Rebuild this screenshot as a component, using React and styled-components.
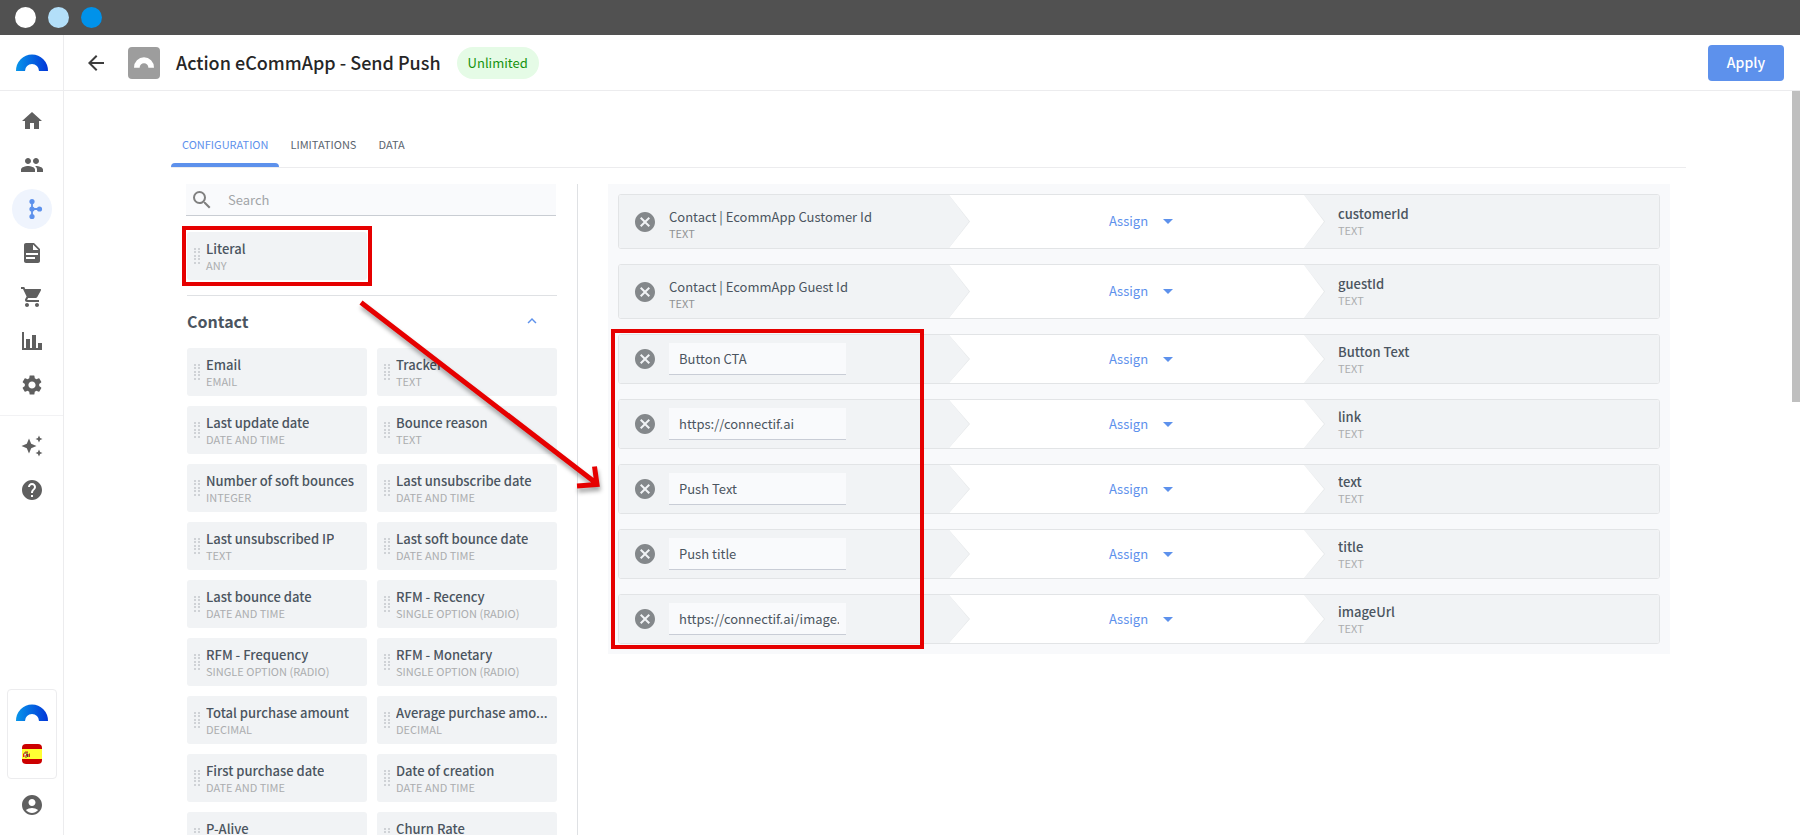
import styled, { createGlobalStyle } from "styled-components";
import {
  MdAccountCircle,
  MdArrowBack,
  MdArrowDropDown,
  MdCancel,
  MdGroup,
  MdHelp,
  MdHome,
  MdKeyboardArrowUp,
  MdSearch,
  MdSettings,
  MdShoppingCart,
} from "react-icons/md";

const GlobalStyle = createGlobalStyle`
  * {
    box-sizing: border-box;
  }

  body {
    margin: 0;
    overflow: hidden;
    background: #fff;
    color: #4b5560;
    font-family: "Noto Sans CJK SC", "Noto Sans", sans-serif;
    font-size: 13px;
    line-height: 16px;
  }

  button,
  input {
    font: inherit;
    color: inherit;
    border: 0;
    padding: 0;
    background: none;
  }

  svg {
    display: block;
    flex-shrink: 0;
  }
`;

const Window = styled.div`
  display: flex;
  flex-direction: column;
  height: 100vh;
`;

const WindowBar = styled.div`
  display: flex;
  align-items: center;
  flex-shrink: 0;
  gap: 12px;
  height: 35px;
  padding: 0 15px 1px;
  background: #515151;
`;

const WindowDot = styled.span`
  width: 21px;
  height: 21px;
  border-radius: 50%;
  background: ${props => props.$color};
`;

const Shell = styled.div`
  display: flex;
  flex: 1;
  min-height: 0;
`;

const Sidebar = styled.aside`
  display: flex;
  flex-direction: column;
  align-items: center;
  flex-shrink: 0;
  width: 64px;
  border-right: 1px solid #ececee;
  color: #5f5f5f;
`;

const SidebarLogo = styled.a`
  display: flex;
  align-items: center;
  justify-content: center;
  width: 100%;
  height: 56px;
  border-bottom: 1px solid #ececee;
`;

const Nav = styled.nav`
  display: flex;
  flex-direction: column;
  align-items: center;
  gap: 4px;
  width: 100%;
  padding: 10px 0;
  border-bottom: ${props => (props.$divided ? "1px solid #f2f2f4" : "0")};
`;

const NavLink = styled.a`
  display: flex;
  align-items: center;
  justify-content: center;
  width: 40px;
  height: 40px;
  border-radius: 50%;
  color: ${props => (props.$active ? "#5d91ec" : "inherit")};
  background: ${props => (props.$active ? "#eff4fd" : "transparent")};
`;

const StoreButton = styled.button`
  display: flex;
  flex-direction: column;
  align-items: center;
  justify-content: space-between;
  width: 50px;
  height: 90px;
  margin-top: auto;
  padding: 14px 0;
  border: 1px solid #ececee;
  border-radius: 4px;
`;

const AccountLink = styled(NavLink)`
  margin: 6px 0 10px;
`;

const Main = styled.main`
  display: flex;
  flex-direction: column;
  flex: 1;
  min-width: 0;
`;

const Header = styled.header`
  display: flex;
  align-items: center;
  flex-shrink: 0;
  gap: 16px;
  height: 56px;
  padding: 0 16px 0 20px;
  border-bottom: 1px solid #ececee;
`;

const BackButton = styled.button`
  margin-right: 4px;
  color: #3c3c3c;
`;

const AppIcon = styled.span`
  display: flex;
  align-items: center;
  justify-content: center;
  width: 32px;
  height: 32px;
  border-radius: 4px;
  background: #9d9d9d;
`;

const Title = styled.h1`
  margin: 0;
  padding-bottom: 2px;
  color: #262626;
  font-size: 18px;
  font-weight: 500;
  line-height: 24px;
`;

const Badge = styled.span`
  padding: 8px 11px;
  border-radius: 16px;
  color: #16930f;
  background: #e5fbe6;
`;

const ApplyButton = styled.button`
  height: 36px;
  margin-left: auto;
  padding: 0 19px 1px;
  border-radius: 4px;
  color: #fff;
  background: #5d91ec;
  font-size: 14px;
  font-weight: 500;
`;

const ScrollArea = styled.div`
  display: flex;
  flex: 1;
  min-height: 0;
`;

const Content = styled.div`
  display: flex;
  flex-direction: column;
  flex: 1;
  min-width: 0;
  padding: 36px 106px 0 107px;
`;

const ScrollTrack = styled.div`
  width: 8px;
`;

const ScrollThumb = styled.div`
  height: 311px;
  background: #bfbfbf;
`;

const Tabs = styled.div`
  display: flex;
  flex-shrink: 0;
  height: 41px;
  border-bottom: 1px solid #ececee;
`;

const Tab = styled.button`
  position: relative;
  padding: 0 11px 6px;
  color: ${props => (props.$active ? "#5d91ec" : "#5a646e")};
  font-size: 11px;

  &::after {
    content: "";
    display: ${props => (props.$active ? "block" : "none")};
    position: absolute;
    left: 0;
    right: 0;
    bottom: 0;
    height: 4px;
    border-radius: 4px 4px 0 0;
    background: #5d91ec;
  }
`;

const Columns = styled.div`
  position: relative;
  display: flex;
  flex: 1;
  min-height: 0;
  padding: 16px 16px 0 15px;
`;

const Fields = styled.section`
  flex: 0 0 392px;
  padding-right: 20px;
  border-right: 1px solid #dfe1e4;
`;

const SearchBox = styled.label`
  display: flex;
  align-items: center;
  gap: 14px;
  height: 32px;
  margin-right: 1px;
  padding: 0 4px;
  border-bottom: 1px solid #c9cdd3;
  color: #808080;
  background: #f9fafc;
`;

const SearchInput = styled.input`
  flex: 1;
  min-width: 0;
  outline: none;

  &::placeholder {
    color: #a2a5a8;
    opacity: 1;
  }
`;

const CardGrid = styled.div`
  display: grid;
  grid-template-columns: 1fr 1fr;
  gap: 10px;
  margin-left: 1px;
`;

const LiteralGrid = styled(CardGrid)`
  padding: 16px 0 15px;
  border-bottom: 1px solid #dfe1e4;
`;

const Card = styled.div`
  position: relative;
  display: flex;
  align-items: center;
  gap: 6px;
  min-width: 0;
  height: 48px;
  padding: 0 4px 0 7px;
  border-radius: 3px;
  background: #f1f3f5;
`;

const CardText = styled.div`
  min-width: 0;
`;

const FieldName = styled.div`
  overflow: hidden;
  white-space: nowrap;
  text-overflow: ellipsis;
  font-weight: ${props => (props.$light ? 400 : 500)};
  line-height: 18px;
`;

const FieldType = styled.div`
  color: ${props => (props.$dark ? "#8f9294" : "#abadaf")};
  font-size: 11px;
  line-height: 14px;
`;

const GroupHeader = styled.h2`
  display: flex;
  align-items: center;
  justify-content: space-between;
  height: 52px;
  margin: 0;
  padding: 0 16px 2px 1px;
  font-size: 16px;
  font-weight: 700;
`;

const ToggleButton = styled.button`
  color: #5d91ec;
`;

const Mappings = styled.section`
  display: flex;
  flex-direction: column;
  align-self: flex-start;
  flex: 1;
  min-width: 0;
  gap: 15px;
  margin-left: 30px;
  padding: 10px;
  background: #f8f9fb;
`;

const LiteralMappings = styled.div`
  position: relative;
  display: flex;
  flex-direction: column;
  gap: 15px;
`;

const Row = styled.div`
  display: grid;
  grid-template-columns: 330fr 355fr 355fr;
  height: ${props => (props.$tall ? 55 : 50)}px;
  border: 1px solid #e2e4e6;
  border-radius: 3px;
  overflow: hidden;
  background: #fff;
`;

const Source = styled.div`
  position: relative;
  display: flex;
  align-items: center;
  gap: 12px;
  padding-left: 14px;
  background: #f1f3f5;

  &::before,
  &::after {
    content: "";
    position: absolute;
    top: 0;
    bottom: 0;
    left: 100%;
    width: 21px;
    clip-path: polygon(0 0, 100% 50%, 0 100%);
    background: #e6e8ea;
  }

  &::after {
    width: 20px;
    background: #f1f3f5;
  }
`;

const SourceText = styled.div`
  padding-top: 4px;
`;

const RemoveButton = styled.button`
  color: #84888b;
`;

const ValueInput = styled.input`
  width: 177px;
  height: 32px;
  padding: 0 7px 0 10px;
  border-bottom: 1px solid #c9cdd6;
  background: #f9fafc;
  outline: none;
`;

const Operation = styled.div`
  display: flex;
  align-items: center;
  justify-content: center;
  padding: 0 0 1px 36px;
`;

const AssignButton = styled.button`
  display: flex;
  align-items: center;
  gap: 8px;
  color: #5d91ec;
`;

const Target = styled.div`
  position: relative;
  display: flex;
  flex-direction: column;
  justify-content: center;
  padding: 0 10px 1px 34px;
  background: #f1f3f5;

  &::before,
  &::after {
    content: "";
    position: absolute;
    top: 0;
    bottom: 0;
    left: 0;
    width: 21px;
    clip-path: polygon(0 0, 100% 50%, 0 100%);
    background: #e6e8ea;
  }

  &::after {
    width: 20px;
    background: #fff;
  }
`;

const Highlight = styled.div`
  position: absolute;
  border: 4px solid #e60000;
  pointer-events: none;
`;

const CardHighlight = styled(Highlight)`
  inset: -6px -5px;
`;

const RowsHighlight = styled(Highlight)`
  top: -5px;
  bottom: -5px;
  left: -7px;
  width: 313px;
`;

const Pointer = styled.svg`
  position: absolute;
  top: 127px;
  left: 180px;
  overflow: visible;
  pointer-events: none;
  filter: drop-shadow(1px 4px 2px rgba(0, 0, 0, 0.35));
`;

const Arc = ({ width, id, flat }) => (
  <svg width={width} height={(width * 17) / 32} viewBox="0 0 32 17">
    <defs>
      <linearGradient id={id} x1="0" x2="1">
        <stop offset="0" stopColor="#0896ea" />
        <stop offset="1" stopColor="#0236d8" />
      </linearGradient>
    </defs>
    <path
      d="M0 17a16 16.5 0 0 1 32 0h-9a7 7 0 0 0-14 0z"
      fill={flat ? "#fff" : `url(#${id})`}
    />
  </svg>
);

const FlowIcon = () => (
  <svg width="24" height="24" viewBox="0 0 24 24" fill="currentColor">
    <circle cx="12" cy="4.5" r="2.6" />
    <circle cx="12" cy="12" r="2.6" />
    <circle cx="12" cy="19.5" r="2.6" />
    <circle cx="19.5" cy="12" r="2.6" />
    <path d="M11.1 4h1.8v16h-1.8zM12 11.1h7v1.8h-7z" />
  </svg>
);

const DocIcon = () => (
  <svg width="24" height="24" viewBox="0 0 24 24" fill="currentColor">
    <path d="M14 2H6c-1.100 0-2 .9-2 2v16c0 1.100.9 2 2 2h12c1.100 0 2-.9 2-2V8zm1 16H6v-2h9zm3-4H6v-2h12zm-5-5V3.500L18.500 9z" />
  </svg>
);

const ChartIcon = () => (
  <svg width="24" height="24" viewBox="0 0 24 24" fill="currentColor">
    <path d="M2 3h2v16h18v2H2zM6 10h4v9H6zM12 6h4v13h-4zM18 14h4v5h-4z" />
  </svg>
);

const SparkleIcon = () => (
  <svg width="24" height="24" viewBox="0 0 24 24" fill="currentColor">
    <path d="M9 4.500l2.200 5.300L16.500 12l-5.300 2.200L9 19.500l-2.200-5.300L1.500 12l5.300-2.200zM19 1.500l1.100 2.400 2.400 1.100-2.400 1.100L19 8.500l-1.100-2.400L15.500 5l2.400-1.100zM19 15.500l1.100 2.400 2.400 1.100-2.400 1.100-1.100 2.400-1.100-2.400-2.400-1.100 2.400-1.100z" />
  </svg>
);

const SpainFlag = () => (
  <svg width="20" height="20" viewBox="0 0 20 20">
    <defs>
      <clipPath id="flag-shape">
        <rect width="20" height="20" rx="4" />
      </clipPath>
    </defs>
    <g clipPath="url(#flag-shape)">
      <path fill="#c00" d="M0 0h20v20H0z" />
      <path fill="#ff3" d="M0 5h20v10H0z" />
      <path fill="#d22" d="M1 9.500h1.500V13H1zM7 9.500h1V13H7zM3 10h2v2H3zM3 7.500h3v1H3z" />
      <path fill="#5c4033" d="M2 8.500h4v1H2zM5 10h1.500v3H5zM3 12.500h2v1H3z" />
      <path fill="#eee" d="M2.500 10H4v1.500H2.500z" />
    </g>
  </svg>
);

const DragHandle = () => (
  <svg width="6" height="16" viewBox="0 0 6 16" fill="#cfd2d6">
    {[0, 3, 7, 10, 14].map(y => (
      <path key={y} d={`M0 ${y}h2v2H0zM4 ${y}h2v2H4z`} />
    ))}
  </svg>
);

const contactFields = [
  ["Email", "EMAIL"],
  ["Tracker", "TEXT"],
  ["Last update date", "DATE AND TIME"],
  ["Bounce reason", "TEXT"],
  ["Number of soft bounces", "INTEGER"],
  ["Last unsubscribe date", "DATE AND TIME"],
  ["Last unsubscribed IP", "TEXT"],
  ["Last soft bounce date", "DATE AND TIME"],
  ["Last bounce date", "DATE AND TIME"],
  ["RFM - Recency", "SINGLE OPTION (RADIO)"],
  ["RFM - Frequency", "SINGLE OPTION (RADIO)"],
  ["RFM - Monetary", "SINGLE OPTION (RADIO)"],
  ["Total purchase amount", "DECIMAL"],
  ["Average purchase amo...", "DECIMAL"],
  ["First purchase date", "DATE AND TIME"],
  ["Date of creation", "DATE AND TIME"],
  ["P-Alive", "DECIMAL"],
  ["Churn Rate", "DECIMAL"],
];

const fieldMappings = [
  { source: "Contact | EcommApp Customer Id", target: "customerId" },
  { source: "Contact | EcommApp Guest Id", target: "guestId" },
];

const literalMappings = [
  { value: "Button CTA", target: "Button Text" },
  { value: "https://connectif.ai", target: "link" },
  { value: "Push Text", target: "text" },
  { value: "Push title", target: "title" },
  { value: "https://connectif.ai/image.jpg", target: "imageUrl" },
];

const FieldCard = ({ name, type, children }) => (
  <Card>
    <DragHandle />
    <CardText>
      <FieldName>{name}</FieldName>
      <FieldType>{type}</FieldType>
    </CardText>
    {children}
  </Card>
);

const MappingRow = ({ source, value, target }) => (
  <Row $tall={Boolean(source)}>
    <Source>
      <RemoveButton type="button" aria-label={`Remove ${target}`}>
        <MdCancel size={24} />
      </RemoveButton>
      {source ? (
        <SourceText>
          <FieldName $light>{source}</FieldName>
          <FieldType $dark>TEXT</FieldType>
        </SourceText>
      ) : (
        <ValueInput type="text" aria-label={target} defaultValue={value} />
      )}
    </Source>
    <Operation>
      <AssignButton type="button">
        Assign
        <MdArrowDropDown size={24} />
      </AssignButton>
    </Operation>
    <Target>
      <FieldName>{target}</FieldName>
      <FieldType>TEXT</FieldType>
    </Target>
  </Row>
);

export default function App() {
  return (
    <Window>
      <GlobalStyle />
      <WindowBar>
        <WindowDot $color="#fff" />
        <WindowDot $color="#b3dff9" />
        <WindowDot $color="#0092ea" />
      </WindowBar>
      <Shell>
        <Sidebar>
          <SidebarLogo href="#" aria-label="Dashboard">
            <Arc width={32} id="arc-top" />
          </SidebarLogo>
          <Nav $divided>
            <NavLink href="#" aria-label="Home">
              <MdHome size={24} />
            </NavLink>
            <NavLink href="#" aria-label="Contacts">
              <MdGroup size={24} />
            </NavLink>
            <NavLink href="#" aria-label="Workflows" $active>
              <FlowIcon />
            </NavLink>
            <NavLink href="#" aria-label="Content">
              <DocIcon />
            </NavLink>
            <NavLink href="#" aria-label="Store">
              <MdShoppingCart size={24} />
            </NavLink>
            <NavLink href="#" aria-label="Reports">
              <ChartIcon />
            </NavLink>
            <NavLink href="#" aria-label="Settings">
              <MdSettings size={24} />
            </NavLink>
          </Nav>
          <Nav>
            <NavLink href="#" aria-label="What's new">
              <SparkleIcon />
            </NavLink>
            <NavLink href="#" aria-label="Help">
              <MdHelp size={24} />
            </NavLink>
          </Nav>
          <StoreButton type="button" aria-label="Change store">
            <Arc width={32} id="arc-store" />
            <SpainFlag />
          </StoreButton>
          <AccountLink href="#" aria-label="Account">
            <MdAccountCircle size={24} />
          </AccountLink>
        </Sidebar>
        <Main>
          <Header>
            <BackButton type="button" aria-label="Back">
              <MdArrowBack size={24} />
            </BackButton>
            <AppIcon>
              <Arc width={20} id="arc-app" flat />
            </AppIcon>
            <Title>Action eCommApp - Send Push</Title>
            <Badge>Unlimited</Badge>
            <ApplyButton type="button">Apply</ApplyButton>
          </Header>
          <ScrollArea>
            <Content>
              <Tabs role="tablist">
                <Tab type="button" role="tab" aria-selected="true" $active>
                  CONFIGURATION
                </Tab>
                <Tab type="button" role="tab">
                  LIMITATIONS
                </Tab>
                <Tab type="button" role="tab">
                  DATA
                </Tab>
              </Tabs>
              <Columns>
                <Fields>
                  <SearchBox>
                    <MdSearch size={24} />
                    <SearchInput type="text" placeholder="Search" aria-label="Search" />
                  </SearchBox>
                  <LiteralGrid>
                    <FieldCard name="Literal" type="ANY">
                      <CardHighlight />
                    </FieldCard>
                  </LiteralGrid>
                  <GroupHeader>
                    Contact
                    <ToggleButton type="button" aria-label="Collapse Contact">
                      <MdKeyboardArrowUp size={18} />
                    </ToggleButton>
                  </GroupHeader>
                  <CardGrid>
                    {contactFields.map(([name, type]) => (
                      <FieldCard key={name} name={name} type={type} />
                    ))}
                  </CardGrid>
                </Fields>
                <Mappings>
                  {fieldMappings.map(item => (
                    <MappingRow key={item.target} {...item} />
                  ))}
                  <LiteralMappings>
                    {literalMappings.map(item => (
                      <MappingRow key={item.target} {...item} />
                    ))}
                    <RowsHighlight />
                  </LiteralMappings>
                </Mappings>
                <Pointer width="250" height="200" viewBox="0 0 250 200">
                  <path
                    d="M10 7.500L245 188M243.500 171.500L246 189.500L226 191"
                    fill="none"
                    stroke="#e60000"
                    strokeWidth="5"
                  />
                </Pointer>
              </Columns>
            </Content>
            <ScrollTrack>
              <ScrollThumb />
            </ScrollTrack>
          </ScrollArea>
        </Main>
      </Shell>
    </Window>
  );
}
